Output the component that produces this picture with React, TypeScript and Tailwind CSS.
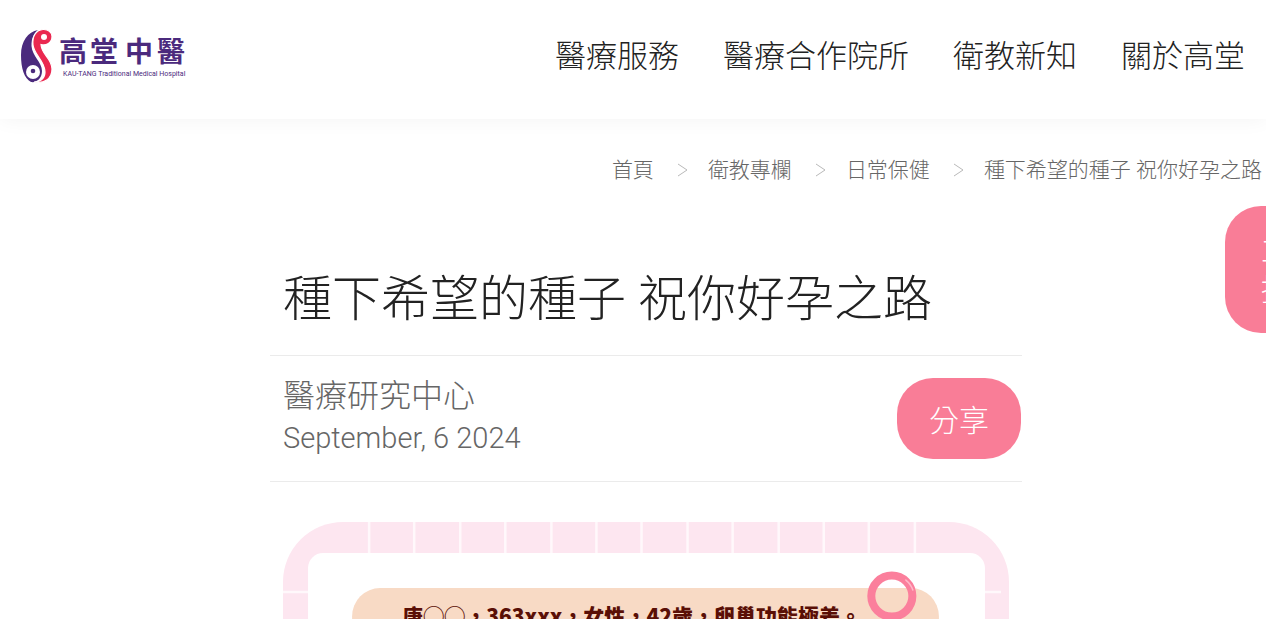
const navItems = ["醫療服務", "醫療合作院所", "衛教新知", "關於高堂"];
const crumbs = ["首頁", "衛教專欄", "日常保健"];
const articleTitle = "種下希望的種子 祝你好孕之路";
const tileLines = Array.from({ length: 13 }, (_, i) => 85 + Math.round(i * 45.4));

function Logo() {
  return (
    <a href="#" aria-label="高堂中醫 KAU-TANG Traditional Medical Hospital" className="shrink-0">
      <svg width="168" height="58" viewBox="0 0 168 58">
        <path
          d="M18 2C8 4 1 13 1 27c0 13 3 23 10 27 6 1 11-4 11-11 0-9-10-15-10.500-25C11.300 10 14 5 18 2Z"
          fill="#4b2a7d"
        />
        <path
          d="M23 1.500c-7 .5-11 7-10 15.500 1.200 10 12 16 12 27 0 6-4 9.500-11 10 10 2 18-3 18-13 0-11-10.500-14-11-24.500 5 1.500 11-1.500 11-8 0-4.500-4-7.300-9-7Z"
          fill="#ea2850"
          stroke="#fff"
          strokeWidth="1.200"
        />
        <circle cx="24" cy="9" r="3" fill="#fff" />
        <circle cx="13" cy="44" r="7" fill="#fff" />
        <circle cx="13" cy="43" r="2.300" fill="#4b2a7d" />
        <text
          x="39 70 105 137"
          y="34"
          fontSize="28"
          fontWeight="700"
          fontFamily="'Noto Sans CJK TC', sans-serif"
          fill="#4b2a7d"
        >
          高堂中醫
        </text>
        <text x="43" y="48" fontSize="7" fontWeight="400" fontFamily="Roboto, sans-serif" fill="#4b2a7d">
          KAU-TANG Traditional Medical Hospital
        </text>
      </svg>
    </a>
  );
}

function Separator() {
  return (
    <svg width="11" height="14" viewBox="0 0 11 14" fill="none" stroke="#b9b9b9" aria-hidden="true">
      <path d="M1 1l9 6-9 6" />
    </svg>
  );
}

function CaseCard() {
  return (
    <svg viewBox="0 0 725 400" className="block w-full" role="img" aria-label="案例">
      <rect width="725" height="460" rx="60" fill="#fde6f0" />
      <g stroke="#fff8fb" strokeWidth="2.500">
        {tileLines.map((x) => (
          <path key={x} d={`M${x + 1} 0V32`} />
        ))}
        <path d="M0 70H26M700 70H717" />
      </g>
      <rect x="25" y="31" width="676" height="400" rx="15" fill="#fff" />
      <rect x="69" y="66" width="586" height="60" rx="28" fill="#f8dac5" />
      <text x="119" y="102" fontSize="21" fontWeight="900" fontFamily="'Noto Sans CJK TC', sans-serif" fill="#5a0f06">
        唐◯◯，363xxx，女性，42歲，卵巢功能極差。
      </text>
      <circle cx="608" cy="74" r="20.500" fill="none" stroke="#fb7f9c" strokeWidth="8" />
      <path d="M622 58q5 4 7 10" fill="none" stroke="#ffb9c9" strokeWidth="1.500" strokeLinecap="round" />
    </svg>
  );
}

export default function App() {
  return (
    <div
      className="relative h-screen overflow-hidden bg-white font-[Roboto,'Noto_Sans_CJK_TC',sans-serif] font-light text-[#222]"
      lang="zh-Hant"
    >
      <header className="flex h-[119px] items-start justify-between pt-7 pr-[21px] pl-5 shadow-[0_0_20px_rgba(0,0,0,0.05)]">
        <Logo />
        <nav className="flex gap-11 pt-1.5 text-[31px] leading-[46px]">
          {navItems.map((item) => (
            <a key={item} href="#">
              {item}
            </a>
          ))}
        </nav>
      </header>

      <nav aria-label="breadcrumb" className="flex justify-end pt-9 pr-1 text-[21px] leading-[30px] text-[#666]">
        <ol className="flex gap-5">
          {crumbs.map((crumb) => (
            <li key={crumb} className="flex items-center gap-[23px]">
              <a href="#">{crumb}</a>
              <Separator />
            </li>
          ))}
          <li>{articleTitle}</li>
        </ol>
      </nav>

      <main className="pt-[78px] pl-[26px]">
        <article className="mx-auto max-w-[752px]">
          <h1 className="px-[13px] pb-[18px] text-[49px] leading-[74px]">{articleTitle}</h1>
          <div className="flex items-center justify-between border-y border-[#ebebeb] pt-[19px] pr-px pb-[22px] pl-[13px]">
            <div className="text-[#666]">
              <p className="text-[32px] leading-[42px]">醫療研究中心</p>
              <p className="text-[29px] leading-[42px]">September, 6 2024</p>
            </div>
            <button type="button" className="mt-0.5 h-[81px] rounded-[36px] bg-[#f97d97] px-8 pt-1 text-[30px] text-white">
              分享
            </button>
          </div>
          <div className="px-[13px] pt-10">
            <CaseCard />
          </div>
        </article>
      </main>

      <button
        type="button"
        className="absolute top-[206px] -right-[91px] h-[127px] w-[132px] rounded-[36px] bg-[#f97d97] text-[30px] leading-10 text-white"
      >
        立即
        <br />
        掛號
      </button>
    </div>
  );
}
